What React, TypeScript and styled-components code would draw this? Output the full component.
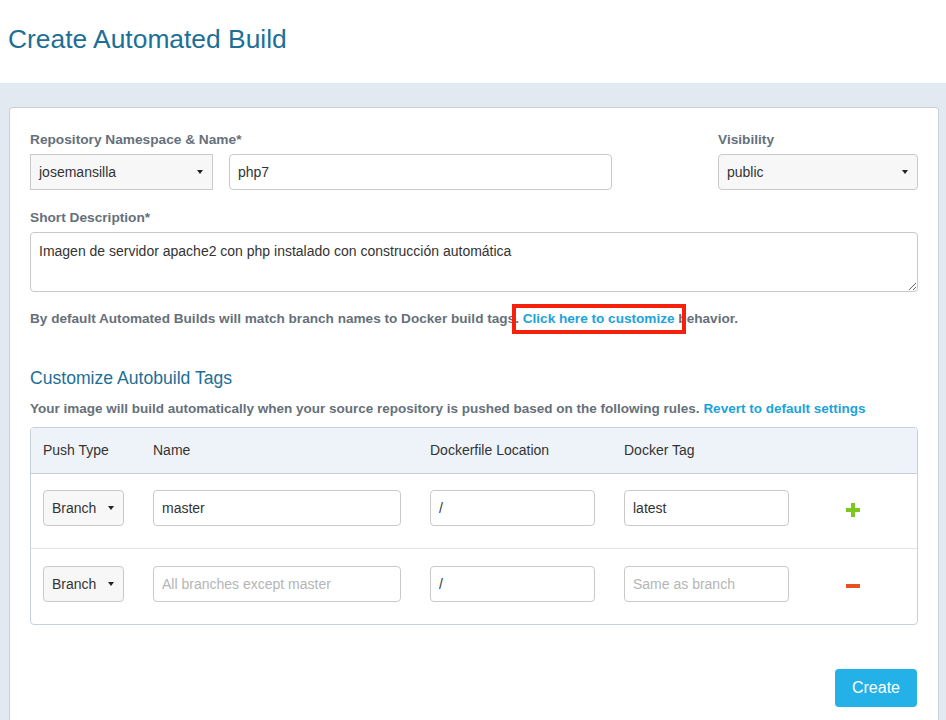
import React from "react";
import styled, { createGlobalStyle } from "styled-components";

const Global = createGlobalStyle`
  html, body { margin: 0; padding: 0; background: #e2e9f1; }
  body { font-family: "Liberation Sans", Arial, sans-serif; color: #333; }
  * { box-sizing: border-box; }
`;

const Header = styled.header`
  height: 83px;
  background: #fff;
  padding: 24px 8px 0;
`;

const Title = styled.h1`
  margin: 0;
  font-size: 26.4px;
  line-height: 30px;
  font-weight: 400;
  color: #1d6f96;
`;

const Main = styled.main`
  padding: 24px 7px 0 9px;
`;

const Card = styled.section`
  background: #fff;
  border: 1px solid #c7d0db;
  border-bottom: none;
  border-radius: 4px 4px 0 0;
  padding: 22px 20px 40px 20px;
  min-height: 613px;
`;

const TopRow = styled.div`
  display: flex;
  justify-content: space-between;
`;

const Field = styled.div<{ $width?: number }>`
  display: flex;
  flex-direction: column;
  gap: 4px;
  width: ${(p) => (p.$width ? `${p.$width}px` : "auto")};
`;

const Label = styled.label`
  font-size: 13.7px;
  line-height: 20px;
  font-weight: 700;
  color: #66707b;
`;

const Inline = styled.div`
  display: flex;
  gap: 16px;
`;

const SelectBox = styled.div<{ $width: number; $square?: boolean }>`
  width: ${(p) => p.$width}px;
  height: 36px;
  display: flex;
  align-items: center;
  justify-content: space-between;
  padding: 0 8px 0 8px;
  background: #f7f7f7;
  border: 1px solid #c9c9c9;
  border-radius: ${(p) => (p.$square ? "0" : "4px")};
  font-size: 14px;
  color: #333;
`;

const Caret = styled.span`
  width: 0;
  height: 0;
  border-left: 3.5px solid transparent;
  border-right: 3.5px solid transparent;
  border-top: 4px solid #222;
  margin-right: 1px;
`;

const TextInput = styled.input<{ $width: number }>`
  width: ${(p) => p.$width}px;
  height: 36px;
  padding: 0 8px;
  border: 1px solid #c9c9c9;
  border-radius: 4px;
  font-family: "Liberation Sans", Arial, sans-serif;
  font-size: 14px;
  color: #333;
  background: #fff;
  outline: none;
  &::placeholder { color: #b5b5b5; }
`;

const TextArea = styled.textarea`
  width: 100%;
  height: 60px;
  padding: 8px 8px;
  border: 1px solid #c9c9c9;
  border-radius: 4px;
  font-family: "Liberation Sans", Arial, sans-serif;
  font-size: 14px;
  line-height: 20px;
  color: #333;
  outline: none;
  display: block;
`;

const Section = styled.div<{ $top: number }>`
  margin-top: ${(p) => p.$top}px;
`;

const Note = styled.p`
  margin: 0;
  font-size: 13.6px;
  line-height: 20px;
  font-weight: 700;
  color: #66707b;
`;

const Link = styled.a<{ $boxed?: boolean }>`
  color: #1ba3dc;
  text-decoration: none;
  position: relative;
  ${(p) =>
    p.$boxed &&
    `
    &::after {
      content: "";
      position: absolute;
      left: -11px;
      right: -11px;
      top: -7px;
      bottom: -8px;
      border: 4px solid #f5210c;
    }
  `}
`;

const SubTitle = styled.h2`
  margin: 0;
  font-size: 17.6px;
  line-height: 24px;
  font-weight: 400;
  color: #1d6f96;
`;

const Para = styled.p`
  margin: 9px 0 0;
  font-size: 13.5px;
  line-height: 20px;
  font-weight: 700;
  color: #66707b;
`;

const Table = styled.div`
  margin-top: 8px;
  border: 1px solid #c7d0db;
  border-radius: 4px;
  overflow: hidden;
`;

const gridCols = `81px 248px 165px 165px 1fr`;

const HeadRow = styled.div`
  display: grid;
  grid-template-columns: ${gridCols};
  column-gap: 29px;
  align-items: center;
  height: 46px;
  padding: 0 12px 1px;
  background: #eef3fa;
  border-bottom: 1px solid #c7d0db;
  font-size: 14px;
  color: #333;
`;

const HeadCell = styled.div`
  white-space: nowrap;
`;

const Row = styled.div<{ $divider?: boolean }>`
  display: grid;
  grid-template-columns: ${gridCols};
  column-gap: 29px;
  align-items: center;
  padding: ${(p) => (p.$divider ? "17px" : "16px")} 12px 22px;
  border-top: ${(p) => (p.$divider ? "1px solid #e2e2e2" : "none")};
`;

const ActionCell = styled.div`
  display: flex;
  justify-content: center;
  padding: 4px 18px 0 0;
`;

const IconButton = styled.button`
  border: none;
  background: none;
  padding: 0;
  display: flex;
  cursor: pointer;
`;

const Footer = styled.div`
  display: flex;
  justify-content: flex-end;
  margin-top: 44px;
  padding-right: 1px;
`;

const CreateButton = styled.button`
  width: 82px;
  height: 38px;
  border: none;
  border-radius: 4px;
  background: #23b1e7;
  color: #fff;
  font-family: "Liberation Sans", Arial, sans-serif;
  font-size: 16px;
`;

const Plus = () => (
  <svg width="14" height="14" viewBox="0 0 14 14">
    <rect x="5" y="0" width="4" height="14" fill="#7cc820" />
    <rect x="0" y="5" width="14" height="4" fill="#7cc820" />
  </svg>
);

const Minus = () => (
  <svg width="14" height="14" viewBox="0 0 14 14">
    <rect x="0" y="5" width="14" height="4" fill="#e8511e" />
  </svg>
);

const Select = ({ value, width, square }: { value: string; width: number; square?: boolean }) => (
  <SelectBox $width={width} $square={square}>
    <span>{value}</span>
    <Caret />
  </SelectBox>
);

export default function App() {
  return (
    <>
      <Global />
      <Header>
        <Title>Create Automated Build</Title>
      </Header>
      <Main>
        <Card>
          <TopRow>
            <Field>
              <Label>Repository Namespace &amp; Name*</Label>
              <Inline>
                <Select value="josemansilla" width={183} square />
                <TextInput $width={383} defaultValue="php7" />
              </Inline>
            </Field>
            <Field $width={200}>
              <Label>Visibility</Label>
              <Select value="public" width={200} />
            </Field>
          </TopRow>
          <Section $top={18}>
            <Field>
              <Label>Short Description*</Label>
              <TextArea
                readOnly
                defaultValue="Imagen de servidor apache2 con php instalado con construcción automática"
              />
            </Field>
          </Section>
          <Section $top={17}>
            <Note>
              By default Automated Builds will match branch names to Docker build tags.{" "}
              <Link $boxed href="#">Click here to customize</Link> behavior.
            </Note>
          </Section>
          <Section $top={37}>
            <SubTitle>Customize Autobuild Tags</SubTitle>
            <Para>
              Your image will build automatically when your source repository is pushed based on the
              following rules. <Link href="#">Revert to default settings</Link>
            </Para>
            <Table>
              <HeadRow>
                <HeadCell>Push Type</HeadCell>
                <HeadCell>Name</HeadCell>
                <HeadCell>Dockerfile Location</HeadCell>
                <HeadCell>Docker Tag</HeadCell>
                <HeadCell />
              </HeadRow>
              <Row>
                <Select value="Branch" width={81} />
                <TextInput $width={248} defaultValue="master" />
                <TextInput $width={165} defaultValue="/" />
                <TextInput $width={165} defaultValue="latest" />
                <ActionCell>
                  <IconButton aria-label="Add rule"><Plus /></IconButton>
                </ActionCell>
              </Row>
              <Row $divider>
                <Select value="Branch" width={81} />
                <TextInput $width={248} placeholder="All branches except master" />
                <TextInput $width={165} defaultValue="/" />
                <TextInput $width={165} placeholder="Same as branch" />
                <ActionCell>
                  <IconButton aria-label="Remove rule"><Minus /></IconButton>
                </ActionCell>
              </Row>
            </Table>
          </Section>
          <Footer>
            <CreateButton>Create</CreateButton>
          </Footer>
        </Card>
      </Main>
    </>
  );
}
